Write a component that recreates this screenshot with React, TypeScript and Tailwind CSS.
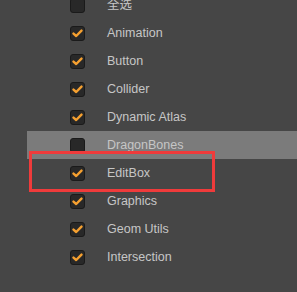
import React from 'react';

const ITEMS: { label: string; checked: boolean }[] = [
  { label: '全选', checked: false },
  { label: 'Animation', checked: true },
  { label: 'Button', checked: true },
  { label: 'Collider', checked: true },
  { label: 'Dynamic Atlas', checked: true },
  { label: 'DragonBones', checked: false },
  { label: 'EditBox', checked: true },
  { label: 'Graphics', checked: true },
  { label: 'Geom Utils', checked: true },
  { label: 'Intersection', checked: true },
];

const Check: React.FC<{ checked: boolean }> = ({ checked }) => (
  <div className="w-[15px] h-[15px] rounded-[3px] bg-[#282828] border border-[#1a1a1a] flex items-center justify-center shrink-0">
    {checked && (
      <svg width="11" height="9" viewBox="0 0 11 9" fill="none">
        <path d="M1.5 4.6 L4.2 7 L9.5 1.6" stroke="#f5a030" strokeWidth="2.4" strokeLinecap="round" strokeLinejoin="round" />
      </svg>
    )}
  </div>
);

export default function App() {
  return (
    <div className="relative w-[297px] h-[292px] overflow-hidden bg-[#464646] font-['Liberation_Sans','Noto_Sans_CJK_SC',sans-serif]">
      <div className="flex flex-col -mt-[9px]">
        {ITEMS.map((item, i) => (
          <div
            key={item.label}
            className={`h-[28px] flex items-center ml-[27px] pl-[43px] ${i === 5 ? 'bg-[#7b7b7b]' : ''}`}
          >
            <Check checked={item.checked} />
            <span className="ml-[22px] pt-[1px] text-[12.5px] text-[#c6c6c6]">{item.label}</span>
          </div>
        ))}
      </div>
      {/* highlight marker */}
      <div className="absolute left-[29px] top-[151px] w-[186px] h-[41px] border-[3px] border-[#ef3b3b]" />
    </div>
  );
}
